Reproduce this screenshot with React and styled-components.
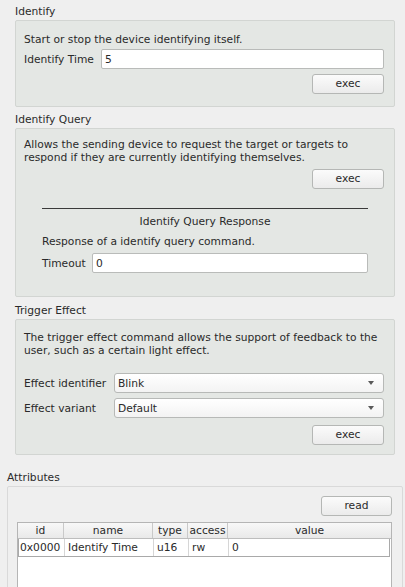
import React from "react";
import styled, { createGlobalStyle } from "styled-components";

const GlobalStyle = createGlobalStyle`
  html, body { margin: 0; padding: 0; background: #efefef; }
  body {
    font-family: "DejaVu Sans", "Liberation Sans", sans-serif;
    font-size: 10.7px;
    color: #2a2a2a;
  }
  * { box-sizing: border-box; }
`;

const Page = styled.div`
  width: 405px;
  height: 587px;
  overflow: hidden;
  display: flex;
  flex-direction: column;
  padding: 5px 2px 0 7px;
`;

const Commands = styled.div`
  display: flex;
  flex-direction: column;
  padding: 0 8px;
`;

const Section = styled.section`
  display: flex;
  flex-direction: column;
  margin-top: ${(p) => p.$gap || 0}px;
`;

const Title = styled.div`
  line-height: 14px;
  height: 14px;
  margin-bottom: 1px;
  white-space: nowrap;
`;

const Box = styled.div`
  display: flex;
  flex-direction: column;
  background: ${(p) => (p.$plain ? "#efefef" : "#e4e7e4")};
  border: 1px solid ${(p) => (p.$plain ? "#d9d9d9" : "#d2d5d2")};
  border-radius: 2px;
  padding: ${(p) => p.$pad};
`;

const Desc = styled.p`
  margin: ${(p) => p.$mt || 0}px 0 0 0;
  line-height: ${(p) => p.$lh || 13}px;
  white-space: pre-line;
`;

const FormRow = styled.div`
  display: flex;
  align-items: center;
  margin-top: ${(p) => p.$mt || 0}px;
`;

const Label = styled.span`
  width: ${(p) => p.$w}px;
  flex: none;
  white-space: nowrap;
`;

const Field = styled.div`
  flex: 1;
  height: 20px;
  background: #ffffff;
  border: 1px solid #b9bbb9;
  border-radius: 2px;
  padding: 0 3px;
  display: flex;
  align-items: center;
`;

const Combo = styled.div`
  flex: 1;
  height: 20px;
  background: linear-gradient(#ffffff, #f3f3f3);
  border: 1px solid #b7b9b7;
  border-radius: 3px;
  padding: 0 3px 0 3px;
  display: flex;
  align-items: center;
  justify-content: space-between;
`;

const Arrow = styled.span`
  width: 0;
  height: 0;
  border-left: 3.5px solid transparent;
  border-right: 3.5px solid transparent;
  border-top: 4px solid #5a5a5a;
  margin-right: 6px;
`;

const ButtonRow = styled.div`
  display: flex;
  justify-content: flex-end;
  margin-top: ${(p) => p.$mt || 0}px;
`;

const Button = styled.button`
  width: ${(p) => p.$w || 72}px;
  height: 20px;
  font: inherit;
  color: #2a2a2a;
  background: linear-gradient(#fbfbfb, #ebebeb);
  border: 1px solid #b5b7b5;
  border-radius: 3px;
  padding: 0;
  line-height: 18px;
`;

const SubGroup = styled.div`
  display: flex;
  flex-direction: column;
  margin: ${(p) => p.$mt}px 16px 0 18px;
  border-top: 1px solid #3a3a3a;
`;

const SubTitle = styled.div`
  text-align: center;
  line-height: 13px;
  margin-top: 6px;
`;

const Table = styled.div`
  margin-top: 6px;
  background: #ffffff;
  border: 1px solid #b5b5b5;
  height: 120px;
  display: flex;
  flex-direction: column;
`;

const cols = "46px 89px 35px 40px 1fr";

const HeaderRow = styled.div`
  display: grid;
  grid-template-columns: ${cols};
  height: 16px;
  background: linear-gradient(#f8f8f8, #e9e9e9);
  border-bottom: 1px solid #bdbdbd;
`;

const HeadCell = styled.div`
  text-align: center;
  line-height: 15px;
  border-right: ${(p) => (p.$last ? "none" : "1px solid #c9c9c9")};
  white-space: nowrap;
`;

const DataRow = styled.div`
  display: grid;
  grid-template-columns: ${cols};
  height: 18px;
  border: 1px solid #a9a9a9;
  border-top: none;
  margin: 0 1px 0 0;
`;

const Cell = styled.div`
  line-height: 17px;
  padding-left: ${(p) => p.$pl || 3}px;
  border-right: ${(p) => (p.$last ? "none" : "1px solid #d6d6d6")};
  white-space: nowrap;
  overflow: hidden;
`;

export default function App() {
  return (
    <>
      <GlobalStyle />
      <Page>
        <Commands>
          <Section>
            <Title>Identify</Title>
            <Box $pad="12px 10px 12px 8px">
              <Desc>Start or stop the device identifying itself.</Desc>
              <FormRow $mt={3}>
                <Label $w={77}>Identify Time</Label>
                <Field>5</Field>
              </FormRow>
              <ButtonRow $mt={5}>
                <Button>exec</Button>
              </ButtonRow>
            </Box>
          </Section>

          <Section $gap={6}>
            <Title>Identify Query</Title>
            <Box $pad="9px 10px 23px 8px">
              <Desc>
                {"Allows the sending device to request the target or targets to\nrespond if they are currently identifying themselves."}
              </Desc>
              <ButtonRow $mt={5}>
                <Button>exec</Button>
              </ButtonRow>
              <SubGroup $mt={19}>
                <SubTitle>Identify Query Response</SubTitle>
                <Desc $mt={7}>Response of a identify query command.</Desc>
                <FormRow $mt={5}>
                  <Label $w={50}>Timeout</Label>
                  <Field>0</Field>
                </FormRow>
              </SubGroup>
            </Box>
          </Section>

          <Section $gap={7}>
            <Title>Trigger Effect</Title>
            <Box $pad="12px 10px 9px 8px">
              <Desc $lh={12.5}>
                {"The trigger effect command allows the support of feedback to the\nuser, such as a certain light effect."}
              </Desc>
              <FormRow $mt={16}>
                <Label $w={90}>Effect identifier</Label>
                <Combo>
                  <span>Blink</span>
                  <Arrow />
                </Combo>
              </FormRow>
              <FormRow $mt={5}>
                <Label $w={90}>Effect variant</Label>
                <Combo>
                  <span>Default</span>
                  <Arrow />
                </Combo>
              </FormRow>
              <ButtonRow $mt={7}>
                <Button>exec</Button>
              </ButtonRow>
            </Box>
          </Section>
        </Commands>

        <Section $gap={16}>
          <Title>Attributes</Title>
          <Box $plain $pad="9px 10px 0 9px">
            <ButtonRow>
              <Button $w={71}>read</Button>
            </ButtonRow>
            <Table>
              <HeaderRow>
                <HeadCell>id</HeadCell>
                <HeadCell>name</HeadCell>
                <HeadCell>type</HeadCell>
                <HeadCell>access</HeadCell>
                <HeadCell $last>value</HeadCell>
              </HeaderRow>
              <DataRow>
                <Cell $pl={1}>0x0000</Cell>
                <Cell>Identify Time</Cell>
                <Cell>u16</Cell>
                <Cell>rw</Cell>
                <Cell $last>0</Cell>
              </DataRow>
            </Table>
          </Box>
        </Section>
      </Page>
    </>
  );
}
